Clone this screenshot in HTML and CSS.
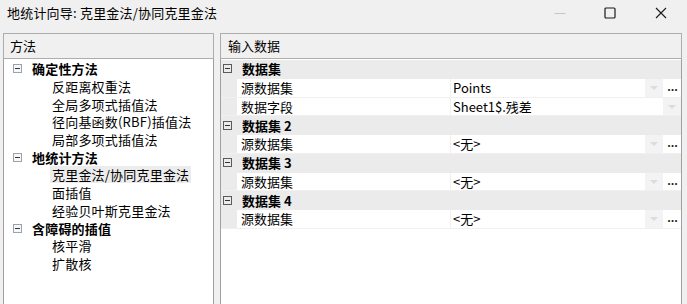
FILE: index.html
```html
<!DOCTYPE html>
<html lang="zh-CN">
  <head>
    <meta charset="UTF-8" />
    <title>地统计向导</title>
    <link rel="stylesheet" href="styles.css">
  </head>

  <body>
    <div class="window">
      <div class="titlebar">
        <span class="title">地统计向导: 克里金法/协同克里金法</span>
        <div class="controls">
          <span class="ctl ctl-min">
            <svg width="12" height="12" viewBox="0 0 12 12"><path d="M0.5 6.5h11" stroke="#c4c4c4" stroke-width="1"/></svg>
          </span>
          <span class="ctl ctl-max">
            <svg width="12" height="12" viewBox="0 0 12 12"><rect x="1" y="1" width="10" height="10" rx="1" fill="none" stroke="#1a1a1a" stroke-width="1.2"/></svg>
          </span>
          <span class="ctl ctl-close">
            <svg width="12" height="12" viewBox="0 0 12 12"><path d="M1 1l10 10M11 1L1 11" stroke="#1a1a1a" stroke-width="1.1"/></svg>
          </span>
        </div>
      </div>

      <div class="panes">
        <section class="pane methods">
          <div class="pane-head">方法</div>
          <ul class="tree">
            <li class="node"><span class="toggle"></span>确定性方法</li>
            <li class="leaf">反距离权重法</li>
            <li class="leaf">全局多项式插值法</li>
            <li class="leaf">径向基函数(RBF)插值法</li>
            <li class="leaf">局部多项式插值法</li>
            <li class="node"><span class="toggle"></span>地统计方法</li>
            <li class="leaf"><span class="selected">克里金法/协同克里金法</span></li>
            <li class="leaf">面插值</li>
            <li class="leaf">经验贝叶斯克里金法</li>
            <li class="node"><span class="toggle"></span>含障碍的插值</li>
            <li class="leaf">核平滑</li>
            <li class="leaf">扩散核</li>
          </ul>
        </section>

        <section class="pane inputs">
          <div class="pane-head">输入数据</div>
          <div class="grid">
            <div class="row group"><span class="toggle dark"></span>数据集</div>
            <div class="row">
              <span class="gutter"></span>
              <span class="name">源数据集</span>
              <span class="value">Points</span>
              <span class="drop"></span>
              <span class="more">...</span>
            </div>
            <div class="row">
              <span class="gutter"></span>
              <span class="name">数据字段</span>
              <span class="value">Sheet1$.残差</span>
              <span class="drop"></span>
            </div>

            <div class="row group"><span class="toggle dark"></span>数据集 2</div>
            <div class="row">
              <span class="gutter"></span>
              <span class="name">源数据集</span>
              <span class="value">&lt;无&gt;</span>
              <span class="drop"></span>
              <span class="more">...</span>
            </div>

            <div class="row group"><span class="toggle dark"></span>数据集 3</div>
            <div class="row">
              <span class="gutter"></span>
              <span class="name">源数据集</span>
              <span class="value">&lt;无&gt;</span>
              <span class="drop"></span>
              <span class="more">...</span>
            </div>

            <div class="row group"><span class="toggle dark"></span>数据集 4</div>
            <div class="row">
              <span class="gutter"></span>
              <span class="name">源数据集</span>
              <span class="value">&lt;无&gt;</span>
              <span class="drop"></span>
              <span class="more">...</span>
            </div>
          </div>
        </section>
      </div>
    </div>
  </body>
</html>
```

FILE: styles.css
```css
* {
  margin: 0;
  padding: 0;
  box-sizing: border-box;
}

body {
  background-color: #f0f0f0;
  font-family: "Noto Sans CJK SC", "Noto Sans", sans-serif;
  font-size: 13px;
  color: #000;
  overflow: hidden;
}

.window {
  height: 304px;
}

/* title bar */

.titlebar {
  display: flex;
  align-items: center;
  height: 30px;
  padding-left: 7px;
  padding-bottom: 4px;
}

.title {
  flex-grow: 1;
  line-height: 16px;
  letter-spacing: 0.2px;
}

.controls {
  display: flex;
}

.ctl {
  display: flex;
  align-items: center;
  justify-content: center;
  width: 50px;
  height: 26px;
}

.ctl-close {
  width: 52px;
}

/* panes */

.panes {
  display: flex;
  gap: 6px;
  padding: 3px 0 0 3px;
  height: 274px;
}

.pane {
  display: flex;
  flex-direction: column;
}

.methods {
  width: 211px;
}

.inputs {
  width: 462px;
}

.pane-head {
  height: 26px;
  border: 1px solid #adadad;
  background-color: #f0f0f0;
  padding-left: 6px;
  line-height: 23px;
}

.inputs .pane-head {
  padding-left: 7px;
}

/* method tree */

.tree {
  list-style: none;
  flex-grow: 1;
  background-color: #fff;
  border-left: 1px solid #a0a0a0;
  border-right: 1px solid #a0a0a0;
  padding-top: 1px;
}

.tree li {
  display: flex;
  align-items: center;
  height: 17.7px;
  line-height: 17px;
  white-space: nowrap;
  letter-spacing: 0.2px;
}

.tree .node {
  font-weight: bold;
  padding-left: 9px;
}

.tree .leaf {
  padding-left: 46px;
}

.tree .leaf:not(:has(.selected)) {
  padding-left: 48px;
}

.selected {
  background-color: #ececec;
  padding: 0 2px;
}

.toggle {
  position: relative;
  display: inline-block;
  width: 9px;
  height: 9px;
  border: 1px solid #9aa3b0;
  background-color: #f7f7f7;
  margin-right: 10px;
}

.toggle::after {
  content: "";
  position: absolute;
  left: 1px;
  top: 3px;
  width: 5px;
  height: 1px;
  background-color: #333;
}

.toggle.dark {
  border-color: #5a5a5a;
  background-color: transparent;
  margin-right: 10px;
}

/* property grid */

.grid {
  flex-grow: 1;
  background-color: #fff;
  border-left: 1px solid #a0a0a0;
  border-right: 1px solid #a0a0a0;
  padding-top: 1px;
}

.row {
  display: flex;
  align-items: stretch;
  height: 18.75px;
  border-bottom: 1px solid #f0f0f0;
  white-space: nowrap;
}

.row.group {
  align-items: center;
  background-color: #ebebeb;
  border-bottom-color: #ebebeb;
  font-weight: bold;
  padding-left: 2px;
}

.gutter {
  width: 16px;
  background-color: #ebebeb;
}

.name {
  width: 214px;
  padding-left: 4px;
  line-height: 17px;
  border-right: 1px solid #f0f0f0;
}

.value {
  flex-grow: 1;
  padding-left: 2px;
  line-height: 17px;
}

.drop {
  position: relative;
  width: 18px;
  background-color: #f3f3f3;
}

.drop::after {
  content: "";
  position: absolute;
  left: 5px;
  top: 7px;
  border-left: 4px solid transparent;
  border-right: 4px solid transparent;
  border-top: 4px solid #dcdcdc;
}

.more {
  width: 17px;
  font-size: 11px;
  font-weight: bold;
  line-height: 15px;
  text-align: center;
  color: #222;
  margin-left: 1px;
}
```
